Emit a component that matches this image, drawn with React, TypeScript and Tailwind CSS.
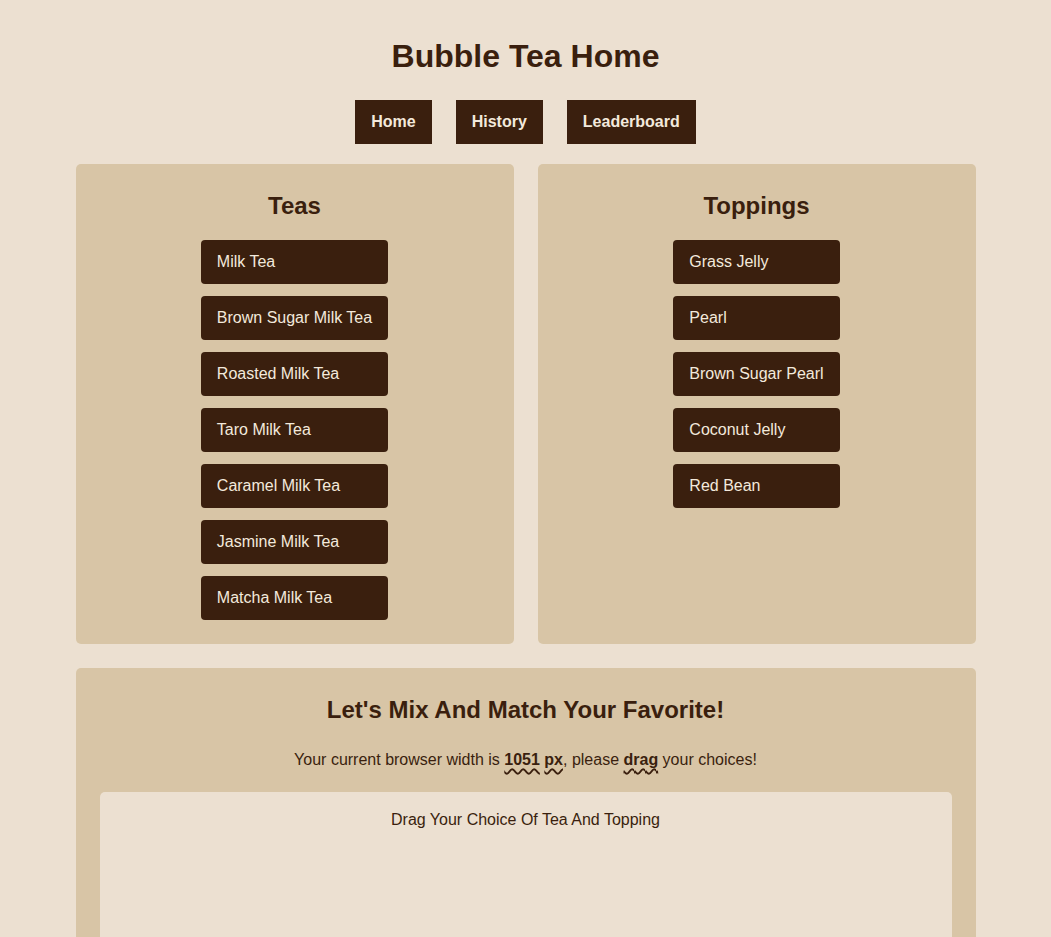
const TEAS = [
  'Milk Tea',
  'Brown Sugar Milk Tea',
  'Roasted Milk Tea',
  'Taro Milk Tea',
  'Caramel Milk Tea',
  'Jasmine Milk Tea',
  'Matcha Milk Tea',
]

const TOPPINGS = ['Grass Jelly', 'Pearl', 'Brown Sugar Pearl', 'Coconut Jelly', 'Red Bean']

function ChoicePanel({ title, items }: { title: string; items: string[] }) {
  return (
    <div className="flex-1 rounded-[5px] bg-[#d8c5a6] pt-7 pb-6 flex flex-col items-center">
      <h2 className="text-[24px] leading-[28px] font-bold text-[#3a1f0e] mb-5">{title}</h2>
      <div className="inline-flex flex-col gap-3">
        {items.map((item) => (
          <div
            key={item}
            draggable
            className="h-11 flex items-center px-4 rounded-[4px] bg-[#3a1f0e] text-[#f3e9dc] text-base whitespace-nowrap cursor-grab"
          >
            {item}
          </div>
        ))}
      </div>
    </div>
  )
}

export default function App() {
  const navItems = ['Home', 'History', 'Leaderboard']

  return (
    <div
      className="min-h-screen bg-[#ece0d1] text-[#3a1f0e] pb-10"
      style={{ fontFamily: '"Liberation Sans", Arial, sans-serif' }}
    >
      <h1 className="pt-[38px] text-center text-[32px] leading-[37px] font-bold">Bubble Tea Home</h1>
      <nav className="mt-[25px] flex justify-center gap-6">
        {navItems.map((item) => (
          <a
            key={item}
            href="#"
            className="h-11 flex items-center px-4 bg-[#3a1f0e] text-[#f3e9dc] font-bold text-base"
          >
            {item}
          </a>
        ))}
      </nav>
      <div className="w-[900px] mx-auto mt-5 flex flex-col gap-6">
        <div className="flex gap-6">
          <ChoicePanel title="Teas" items={TEAS} />
          <ChoicePanel title="Toppings" items={TOPPINGS} />
        </div>
        <div className="rounded-[5px] bg-[#d8c5a6] pt-7 px-6 pb-6">
          <h2 className="text-center text-[24px] leading-[28px] font-bold">Let's Mix And Match Your Favorite!</h2>
          <p className="mt-[27px] text-center text-base leading-[18px]">
            Your current browser width is{' '}
            <b className="underline decoration-wavy decoration-[1.5px] underline-offset-[3px]">1051</b>{' '}
            <b className="underline decoration-wavy decoration-[1.5px] underline-offset-[3px]">px</b>, please{' '}
            <b className="underline decoration-wavy decoration-[1.5px] underline-offset-[3px]">drag</b> your choices!
          </p>
          <div className="mt-[23px] h-[320px] rounded-[5px] bg-[#ece0d1] pt-[19px] text-center text-base leading-[18px]">
            Drag Your Choice Of Tea And Topping
          </div>
        </div>
      </div>
    </div>
  )
}
